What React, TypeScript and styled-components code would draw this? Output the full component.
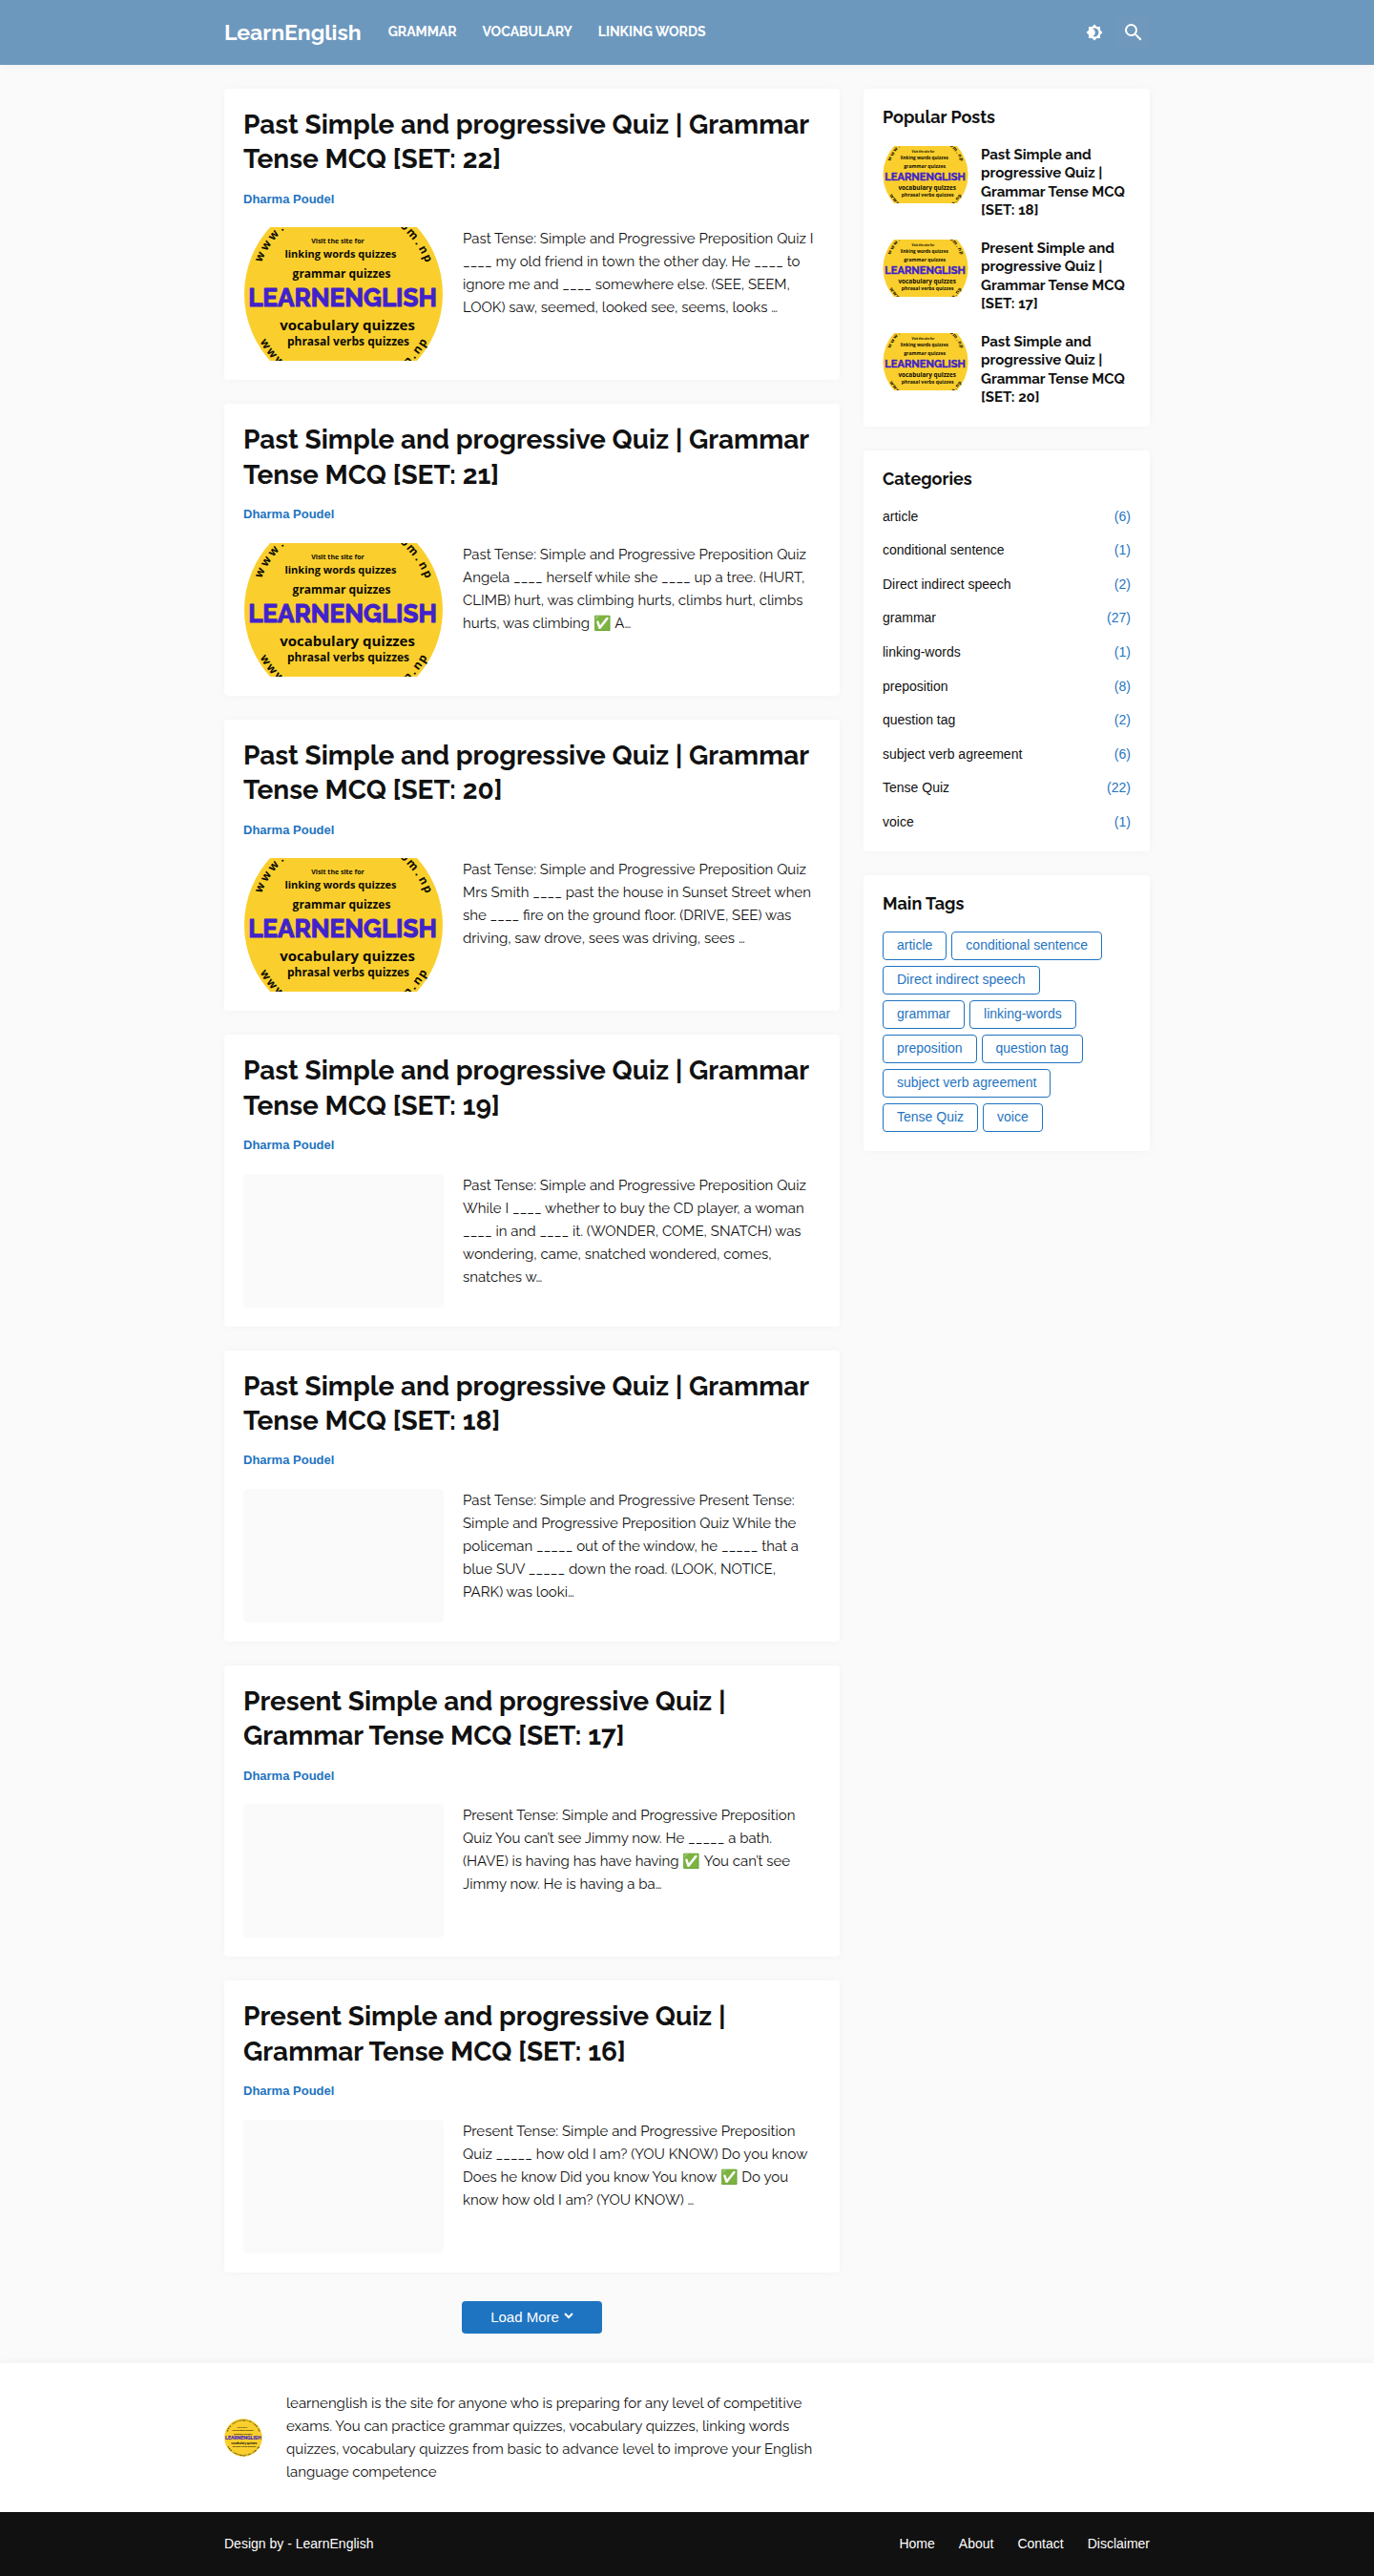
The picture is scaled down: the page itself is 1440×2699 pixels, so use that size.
import React from "react";
import styled, { createGlobalStyle } from "styled-components";
import { MdBrightness4, MdSearch } from "react-icons/md";

const heading = `Raleway, Lato, "Open Sans", sans-serif`;
const ui = `"Liberation Sans", Arial, sans-serif`;
const accent = "#1f74c1";
const ink = "#111111";

const GlobalStyle = createGlobalStyle`
  *, *::before, *::after { box-sizing: border-box; }
  body { margin: 0; background: #fafafa; color: ${ink}; font-family: ${ui}; font-size: 14px; }
  h1, h2, h3, p, ul { margin: 0; padding: 0; }
  ul { list-style: none; }
  a { color: inherit; text-decoration: none; }
`;

const Container = styled.div`
  width: 100%;
  max-width: 1010px;
  margin: 0 auto;
  padding: 0 20px;
`;

/* Header */
const Header = styled.header`
  background: #6d98be;
  color: #ffffff;
  box-shadow: 0 0 10px rgba(0, 0, 0, 0.05);
`;
const HeaderRow = styled(Container)`
  display: flex;
  align-items: center;
  height: 68px;
`;
const SiteName = styled.a`
  font: 700 23px/28px ${heading};
  margin-right: 28px;
`;
const Nav = styled.nav`
  display: flex;
  flex: 1;
  gap: 27px;
  padding-bottom: 2px;
`;
const NavLink = styled.a`
  font: 700 14px/20px ${heading};
  text-transform: uppercase;
`;
const HeaderTools = styled.div`
  display: flex;
  gap: 7px;
`;
const IconButton = styled.button<{ $tinted?: boolean }>`
  display: grid;
  place-items: center;
  width: 34px;
  height: 34px;
  padding: 0;
  border: 0;
  border-radius: 4px;
  color: #ffffff;
  background: ${(p) => (p.$tinted ? "rgba(155, 155, 155, 0.05)" : "transparent")};
  cursor: pointer;
`;

/* Page body */
const Page = styled(Container)`
  display: flex;
  align-items: flex-start;
  gap: 25px;
  padding-top: 25px;
`;
const Main = styled.main`
  flex: 1;
  min-width: 0;
  display: flex;
  flex-direction: column;
  gap: 25px;
`;
const Sidebar = styled.aside`
  width: 300px;
  display: flex;
  flex-direction: column;
  gap: 25px;
`;
const Card = styled.section`
  padding: 20px;
  background: #ffffff;
  border-radius: 4px;
  box-shadow: 0 0 10px rgba(0, 0, 0, 0.03);
`;

/* Post list */
const PostTitle = styled.h2`
  font: 700 28px/1.3 ${heading};
`;
const Author = styled.a`
  display: block;
  margin: 15px 0 22px;
  font: 700 13px/1.2 ${ui};
  color: ${accent};
`;
const PostBody = styled.div`
  display: flex;
  gap: 20px;
`;
const Thumb = styled.a`
  flex: none;
  width: 210px;
  height: 140px;
  border-radius: 4px;
  background: #fafafa;
  overflow: hidden;
`;
const Excerpt = styled.p`
  flex: 1;
  min-width: 0;
  padding-right: 3px;
  font: 400 15px/24px ${heading};
  color: ${ink};
`;
const MoreRow = styled.div`
  display: flex;
  justify-content: center;
  padding: 5px 0 31px;
`;
const LoadMore = styled.button`
  display: flex;
  align-items: center;
  gap: 5px;
  height: 34px;
  padding: 0 30px;
  border: 0;
  border-radius: 4px;
  background: ${accent};
  color: #ffffff;
  font: 400 15px/34px ${ui};
  cursor: pointer;
`;
const Chevron = styled.svg`
  width: 10px;
  height: 10px;
  margin-bottom: 4px;
  fill: none;
  stroke: currentColor;
  stroke-width: 2;
`;

/* Sidebar widgets */
const WidgetTitle = styled.h3`
  margin-bottom: 20px;
  font: 700 18px/1.1 ${heading};
`;
const PopularList = styled.ul`
  display: grid;
  gap: 20px;
`;
const PopularItem = styled.li`
  display: flex;
  gap: 13px;
`;
const SmallThumb = styled.a`
  flex: none;
  width: 90px;
  height: 60px;
  border-radius: 4px;
  overflow: hidden;
`;
const PopularLink = styled.a`
  flex: 1;
  font: 700 15px/1.3 ${heading};
`;
const CategoryList = styled.ul`
  display: grid;
  gap: 16px;
`;
const CategoryLink = styled.a`
  display: flex;
  justify-content: space-between;
  line-height: 1.4;
`;
const Count = styled.span`
  color: ${accent};
`;
const TagList = styled.ul`
  display: flex;
  flex-wrap: wrap;
  row-gap: 6px;
`;
const Tag = styled.a`
  display: block;
  height: 30px;
  margin-right: 5px;
  padding: 0 14px;
  border: 1px solid ${accent};
  border-radius: 4px;
  color: ${accent};
  line-height: 26px;
`;

/* Footer */
const About = styled.section`
  padding: 30px 0;
  background: #ffffff;
  box-shadow: 0 0 10px rgba(0, 0, 0, 0.05);
`;
const AboutRow = styled(Container)`
  display: flex;
  align-items: center;
  gap: 25px;
`;
const AboutLogo = styled.a`
  flex: none;
  width: 40px;
  height: 40px;
`;
const AboutText = styled.p`
  max-width: 565px;
  font: 400 15px/24px ${heading};
  color: ${ink};
`;
const Bottom = styled.footer`
  background: ${ink};
  color: #ffffff;
`;
const BottomRow = styled(Container)`
  display: flex;
  align-items: center;
  justify-content: space-between;
  height: 67px;
`;
const BottomNav = styled.nav`
  display: flex;
  gap: 25px;
`;

const BadgeSvg = styled.svg`
  display: block;
  width: 100%;
  height: 100%;
  background: #ffffff;
`;
const BadgeText = styled.text<{ $size: number }>`
  font: 700 ${(p) => p.$size}px "Open Sans", "Noto Sans", sans-serif;
  fill: #0d0b02;
  text-anchor: middle;
`;
const BadgeName = styled(BadgeText)`
  font-family: ${heading};
  fill: #4122cb;
  stroke: #4122cb;
  stroke-width: 1;
  stroke-linejoin: round;
`;

const ring = "www.learnenglish.com.np".split("");
const step = (c: string) => ("wm".includes(c) ? 8 : ".li".includes(c) ? 5 : 6);
const ringTotal = ring.reduce((sum, c) => sum + step(c), 0);
const letters = ring.map((char, i) => ({
  char,
  angle: ring.slice(0, i).reduce((sum, d) => sum + step(d), 0) + step(char) / 2 - ringTotal / 2,
}));
/* The cropped badge only reaches the outer letters of each arc. */
const outerLetters = letters.filter((l) => Math.abs(l.angle) > 39);
const lowerOuterLetters = letters.filter((l) => Math.abs(l.angle) > 48);

function Badge({ full = false }: { full?: boolean }) {
  const upper = full ? letters : outerLetters;
  const lower = full ? letters : lowerOuterLetters;
  return (
    <BadgeSvg viewBox={full ? "0 0 210 210" : "0 35 210 140"} aria-hidden="true">
      <circle cx="105" cy="105" r="104" fill="#facf2d" />
      {upper.map(({ char, angle }) => (
        <BadgeText key={angle} $size={12} x="105" y="13" transform={`rotate(${angle} 105 105)`}>
          {char}
        </BadgeText>
      ))}
      {lower.map(({ char, angle }) => (
        <BadgeText key={angle} $size={12} x="105" y="206" transform={`rotate(${-angle * 0.87} 105 105)`}>
          {char}
        </BadgeText>
      ))}
      <BadgeText $size={7} x="99" y="52">Visit the site for</BadgeText>
      <BadgeText $size={11} x="102" y="67">linking words quizzes</BadgeText>
      <BadgeText $size={12} x="103" y="88">grammar quizzes</BadgeText>
      <BadgeName $size={26} x="104" y="118">LEARNENGLISH</BadgeName>
      <BadgeText $size={15} x="109" y="143">vocabulary quizzes</BadgeText>
      <BadgeText $size={12} x="110" y="159">phrasal verbs quizzes</BadgeText>
    </BadgeSvg>
  );
}

const posts = [
  { title: "Past Simple and progressive Quiz | Grammar Tense MCQ [SET: 22]", image: true, text: "Past Tense: Simple and Progressive Preposition Quiz I ____ my old friend in town the other day. He ____ to ignore me and ____ somewhere else. (SEE, SEEM, LOOK) saw, seemed, looked see, seems, looks …" },
  { title: "Past Simple and progressive Quiz | Grammar Tense MCQ [SET: 21]", image: true, text: "Past Tense: Simple and Progressive Preposition Quiz Angela ____ herself while she ____ up a tree. (HURT, CLIMB) hurt, was climbing hurts, climbs hurt, climbs hurts, was climbing ✅ A…" },
  { title: "Past Simple and progressive Quiz | Grammar Tense MCQ [SET: 20]", image: true, text: "Past Tense: Simple and Progressive Preposition Quiz Mrs Smith ____ past the house in Sunset Street when she ____ fire on the ground floor. (DRIVE, SEE) was driving, saw drove, sees was driving, sees …" },
  { title: "Past Simple and progressive Quiz | Grammar Tense MCQ [SET: 19]", image: false, text: "Past Tense: Simple and Progressive Preposition Quiz While I ____ whether to buy the CD player, a woman ____ in and ____ it. (WONDER, COME, SNATCH) was wondering, came, snatched wondered, comes, snatches w…" },
  { title: "Past Simple and progressive Quiz | Grammar Tense MCQ [SET: 18]", image: false, text: "Past Tense: Simple and Progressive Present Tense: Simple and Progressive Preposition Quiz While the policeman _____ out of the window, he _____ that a blue SUV _____ down the road. (LOOK, NOTICE, PARK) was looki…" },
  { title: "Present Simple and progressive Quiz | Grammar Tense MCQ [SET: 17]", image: false, text: "Present Tense: Simple and Progressive Preposition Quiz You can’t see Jimmy now. He _____ a bath. (HAVE) is having has have having ✅ You can’t see Jimmy now. He is having a ba…" },
  { title: "Present Simple and progressive Quiz | Grammar Tense MCQ [SET: 16]", image: false, text: "Present Tense: Simple and Progressive Preposition Quiz _____ how old I am? (YOU KNOW) Do you know Does he know Did you know You know ✅ Do you know how old I am? (YOU KNOW) …" },
];

const popular = [
  "Past Simple and progressive Quiz | Grammar Tense MCQ [SET: 18]",
  "Present Simple and progressive Quiz | Grammar Tense MCQ [SET: 17]",
  "Past Simple and progressive Quiz | Grammar Tense MCQ [SET: 20]",
];

const categories: [string, number][] = [
  ["article", 6],
  ["conditional sentence", 1],
  ["Direct indirect speech", 2],
  ["grammar", 27],
  ["linking-words", 1],
  ["preposition", 8],
  ["question tag", 2],
  ["subject verb agreement", 6],
  ["Tense Quiz", 22],
  ["voice", 1],
];

export default function App() {
  return (
    <>
      <GlobalStyle />
      <Header>
        <HeaderRow>
          <SiteName href="#">LearnEnglish</SiteName>
          <Nav>
            {["Grammar", "Vocabulary", "Linking Words"].map((item) => (
              <NavLink key={item} href="#">{item}</NavLink>
            ))}
          </Nav>
          <HeaderTools>
            <IconButton aria-label="Toggle dark mode"><MdBrightness4 size={18} /></IconButton>
            <IconButton $tinted aria-label="Search"><MdSearch size={24} /></IconButton>
          </HeaderTools>
        </HeaderRow>
      </Header>

      <Page>
        <Main>
          {posts.map((post) => (
            <Card as="article" key={post.title}>
              <PostTitle><a href="#">{post.title}</a></PostTitle>
              <Author href="#">Dharma Poudel</Author>
              <PostBody>
                <Thumb href="#" aria-label={post.title}>{post.image && <Badge />}</Thumb>
                <Excerpt>{post.text}</Excerpt>
              </PostBody>
            </Card>
          ))}
          <MoreRow>
            <LoadMore>
              Load More
              <Chevron viewBox="0 0 10 10" aria-hidden="true">
                <path d="M1 3l4 4 4-4" />
              </Chevron>
            </LoadMore>
          </MoreRow>
        </Main>

        <Sidebar>
          <Card>
            <WidgetTitle>Popular Posts</WidgetTitle>
            <PopularList>
              {popular.map((title) => (
                <PopularItem key={title}>
                  <SmallThumb href="#" aria-label={title}><Badge /></SmallThumb>
                  <PopularLink href="#">{title}</PopularLink>
                </PopularItem>
              ))}
            </PopularList>
          </Card>
          <Card>
            <WidgetTitle>Categories</WidgetTitle>
            <CategoryList>
              {categories.map(([name, count]) => (
                <li key={name}>
                  <CategoryLink href="#">{name}<Count>({count})</Count></CategoryLink>
                </li>
              ))}
            </CategoryList>
          </Card>
          <Card>
            <WidgetTitle>Main Tags</WidgetTitle>
            <TagList>
              {categories.map(([name]) => (
                <li key={name}><Tag href="#">{name}</Tag></li>
              ))}
            </TagList>
          </Card>
        </Sidebar>
      </Page>

      <About>
        <AboutRow>
          <AboutLogo href="#" aria-label="LearnEnglish"><Badge full /></AboutLogo>
          <AboutText>
            learnenglish is the site for anyone who is preparing for any level of competitive exams. You can
            practice grammar quizzes, vocabulary quizzes, linking words quizzes, vocabulary quizzes from basic
            to advance level to improve your English language competence
          </AboutText>
        </AboutRow>
      </About>
      <Bottom>
        <BottomRow>
          <span>Design by - <a href="#">LearnEnglish</a></span>
          <BottomNav>
            {["Home", "About", "Contact", "Disclaimer"].map((item) => (
              <a key={item} href="#">{item}</a>
            ))}
          </BottomNav>
        </BottomRow>
      </Bottom>
    </>
  );
}
